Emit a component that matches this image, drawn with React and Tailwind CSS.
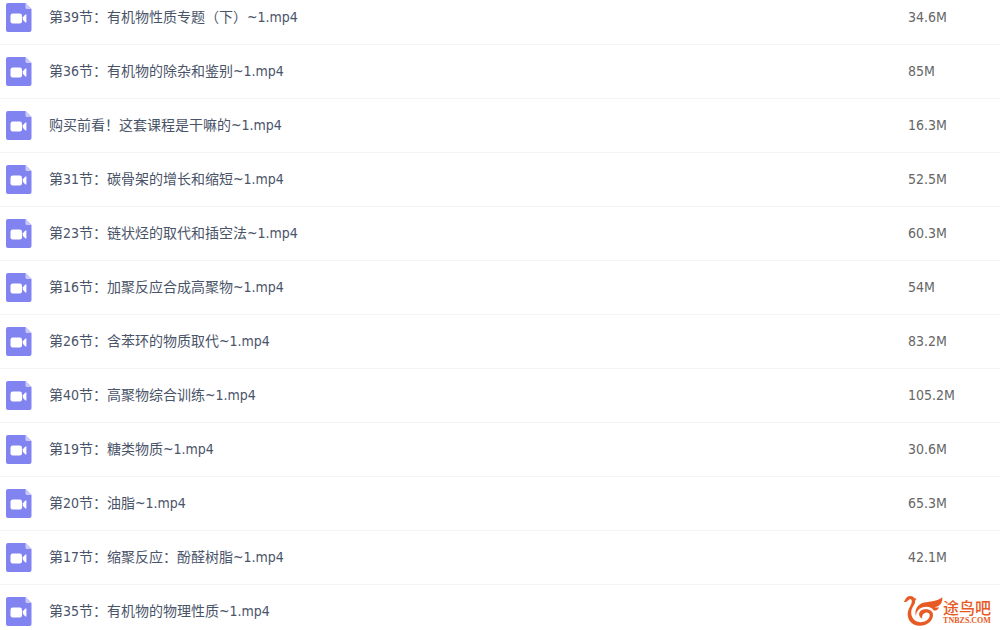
import React from 'react';

const files = [
    { name: '第39节：有机物性质专题（下）~1.mp4', size: '34.6M' },
    { name: '第36节：有机物的除杂和鉴别~1.mp4', size: '85M' },
    { name: '购买前看！这套课程是干嘛的~1.mp4', size: '16.3M' },
    { name: '第31节：碳骨架的增长和缩短~1.mp4', size: '52.5M' },
    { name: '第23节：链状烃的取代和插空法~1.mp4', size: '60.3M' },
    { name: '第16节：加聚反应合成高聚物~1.mp4', size: '54M' },
    { name: '第26节：含苯环的物质取代~1.mp4', size: '83.2M' },
    { name: '第40节：高聚物综合训练~1.mp4', size: '105.2M' },
    { name: '第19节：糖类物质~1.mp4', size: '30.6M' },
    { name: '第20节：油脂~1.mp4', size: '65.3M' },
    { name: '第17节：缩聚反应：酚醛树脂~1.mp4', size: '42.1M' },
    { name: '第35节：有机物的物理性质~1.mp4', size: '' },
];

const VideoFileIcon = () => (
    <svg viewBox="0 0 26 29" className="w-[26px] h-[29px] shrink-0" aria-hidden="true">
        <path d="M2 0H19.5L25.5 6V27A2 2 0 0 1 23.5 29H2A2 2 0 0 1 0 27V2A2 2 0 0 1 2 0Z" fill="#8183f1" />
        <path d="M19.5 0L25.5 6H21A1.5 1.5 0 0 1 19.5 4.5Z" fill="#c9c9fa" />
        <rect x="4.5" y="10.5" width="11.5" height="10" rx="2.2" fill="#fff" />
        <path d="M16.8 14.2L19.2 11.7Q20.4 10.8 20.4 12.3V18.7Q20.4 20.2 19.2 19.3L16.8 16.8Z" fill="#fff" />
    </svg>
);

const BirdLogo = () => (
    <svg viewBox="0 0 40 32" className="w-10 h-8 shrink-0" aria-hidden="true" fill="#e75a24">
        {/* Head, neck and body */}
        <path d="M0.5 7C2.2 5.8 2.6 1 7.2 0.9C9.6 0.9 11 2 11.4 3.3C12.4 3.1 13.2 3.5 13.6 4.3C12.6 4.4 12.2 4.9 12.2 6C12.2 9.8 8.6 12.2 8.2 16.8C7.9 22.3 11.6 27 17 27.2C22.2 27.3 26.6 24.3 26.7 20.3C26.7 18.2 24.8 17.1 22.5 17.7C20 18.3 18.6 20.6 19.2 23.6C14.8 21.8 15 16.2 20.2 14.6C25.4 13.1 30.3 15.6 30 20.3C29.6 26.4 23.6 31 16.5 30.8C9 30.5 4.2 25 4.7 18.2C5.1 13 8.8 10.2 8.8 6.2C8.8 4.4 7.5 3.8 6 4.7C4.5 5.7 3.6 7.5 0.5 7Z" />
        {/* Wing */}
        <path d="M12.8 21C11.4 14.5 14.5 9.3 21 7.6C27.5 6 33.8 6.8 39.2 2.2C40 7.2 37.2 11.2 31.6 12.2C33.2 12.8 34.8 12.7 36.2 12.2C34.8 15.2 32.6 16 30.8 15.4C28.6 11.8 23.6 10.8 19 12.6C15.4 14 13.2 16.8 12.8 21Z" />
    </svg>
);

const SiteMark = () => (
    <div className="absolute right-[9px] bottom-0 flex items-end text-[#e75a24]">
        <div className="pb-[3px]">
            <BirdLogo />
        </div>
        <div className="flex flex-col items-center pb-[5px]">
            <span className="text-[16px] leading-[16px] font-medium">途鸟吧</span>
            <span className="font-['Liberation_Serif',serif] text-[8px] leading-[8px] font-bold">TNBZS.COM</span>
        </div>
    </div>
);

const App = () => {
    return (
        <main className="relative h-screen overflow-hidden bg-white font-['DejaVu_Sans_Condensed','Noto_Sans_CJK_SC',sans-serif]">
            <table className="w-full table-fixed border-separate border-spacing-0 -mt-[9px] text-[14px] leading-5">
                <tbody>
                    {files.map((file) => (
                        <tr key={file.name} className="h-[54px]">
                            <td className="p-0 pl-[6px] border-b border-[#f4f4f6] text-[#4a5469]">
                                <div className="flex items-center gap-[17px]">
                                    <VideoFileIcon />
                                    <span className="pb-[2px]">{file.name}</span>
                                </div>
                            </td>
                            <td className="w-[92px] p-0 pb-[2px] border-b border-[#f4f4f6] text-[#666]">{file.size}</td>
                        </tr>
                    ))}
                </tbody>
            </table>
            <SiteMark />
        </main>
    );
};

export default App;
